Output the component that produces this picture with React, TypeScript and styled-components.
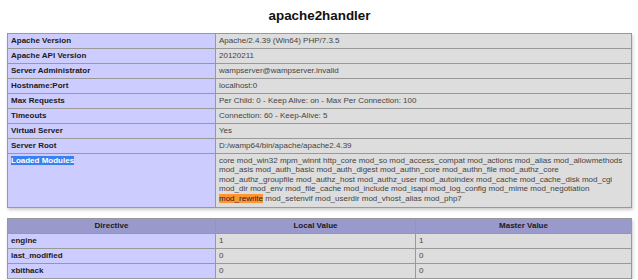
import React from "react";
import styled, { createGlobalStyle } from "styled-components";

const GlobalStyle = createGlobalStyle`
  body {
    margin: 0;
    background: #fff;
    color: #222;
    font-family: "Liberation Sans", Arial, sans-serif;
  }
`;

const Page = styled.div`
  width: 625px;
  padding: 0 7px;
  display: flex;
  flex-direction: column;
`;

const Heading = styled.h2`
  margin: 0;
  height: 33px;
  line-height: 32px;
  font-size: 13.4px;
  font-weight: bold;
  text-align: center;
  color: #111;
`;

const InfoTable = styled.table<{ $spaced?: boolean }>`
  width: 625px;
  margin-top: ${(p) => (p.$spaced ? "10px" : "0")};
  border-collapse: collapse;
  border: 0;
  box-shadow: 1px 2px 3px #ccc;
  table-layout: fixed;
`;

const Cell = styled.td`
  border: 1px solid #999;
  font-size: 8px;
  line-height: 10px;
  height: 10px;
  padding: 2px 3px;
  vertical-align: top;
  text-align: left;
  white-space: nowrap;
`;

const LabelCell = styled(Cell)`
  background: #ccf;
  font-weight: bold;
  color: #1a1a1a;
`;

const ValueCell = styled(Cell)`
  background: #ddd;
  color: #444;
`;

const HeadCell = styled(Cell).attrs({ as: "th" })`
  background: #99c;
  font-weight: bold;
  text-align: center;
  color: #1a1a1a;
`;

const ModuleList = styled.div`
  line-height: 9.4px;
  padding-bottom: 2px;
`;

const Selected = styled.span`
  background: #3b80f0;
  color: #fff;
`;

const FindMatch = styled.span`
  background: #ff9632;
  color: #222;
`;

const apacheRows: [string, string][] = [
  ["Apache Version", "Apache/2.4.39 (Win64) PHP/7.3.5"],
  ["Apache API Version", "20120211"],
  ["Server Administrator", "wampserver@wampserver.invalid"],
  ["Hostname:Port", "localhost:0"],
  ["Max Requests", "Per Child: 0 - Keep Alive: on - Max Per Connection: 100"],
  ["Timeouts", "Connection: 60 - Keep-Alive: 5"],
  ["Virtual Server", "Yes"],
  ["Server Root", "D:/wamp64/bin/apache/apache2.4.39"],
];

const moduleLines = [
  "core mod_win32 mpm_winnt http_core mod_so mod_access_compat mod_actions mod_alias mod_allowmethods",
  "mod_asis mod_auth_basic mod_auth_digest mod_authn_core mod_authn_file mod_authz_core",
  "mod_authz_groupfile mod_authz_host mod_authz_user mod_autoindex mod_cache mod_cache_disk mod_cgi",
  "mod_dir mod_env mod_file_cache mod_include mod_isapi mod_log_config mod_mime mod_negotiation",
];

const directives: [string, string, string][] = [
  ["engine", "1", "1"],
  ["last_modified", "0", "0"],
  ["xbithack", "0", "0"],
];

const App = (): JSX.Element => {
  return (
    <>
      <GlobalStyle />
      <Page>
        <Heading>apache2handler</Heading>
        <InfoTable>
          <colgroup>
            <col style={{ width: 208 }} />
            <col />
          </colgroup>
          <tbody>
            {apacheRows.map(([label, value]) => (
              <tr key={label}>
                <LabelCell>{label}</LabelCell>
                <ValueCell>{value}</ValueCell>
              </tr>
            ))}
            <tr>
              <LabelCell>
                <Selected>Loaded Modules</Selected>
              </LabelCell>
              <ValueCell>
                <ModuleList>
                  {moduleLines.map((line) => (
                    <React.Fragment key={line}>
                      {line}
                      <br />
                    </React.Fragment>
                  ))}
                  <FindMatch>mod_rewrite</FindMatch> mod_setenvif mod_userdir mod_vhost_alias mod_php7
                </ModuleList>
              </ValueCell>
            </tr>
          </tbody>
        </InfoTable>
        <InfoTable $spaced>
          <colgroup>
            <col style={{ width: 208 }} />
            <col style={{ width: 200 }} />
            <col />
          </colgroup>
          <tbody>
            <tr>
              <HeadCell>Directive</HeadCell>
              <HeadCell>Local Value</HeadCell>
              <HeadCell>Master Value</HeadCell>
            </tr>
            {directives.map(([name, local, master]) => (
              <tr key={name}>
                <LabelCell>{name}</LabelCell>
                <ValueCell>{local}</ValueCell>
                <ValueCell>{master}</ValueCell>
              </tr>
            ))}
          </tbody>
        </InfoTable>
      </Page>
    </>
  );
};

export default App;
